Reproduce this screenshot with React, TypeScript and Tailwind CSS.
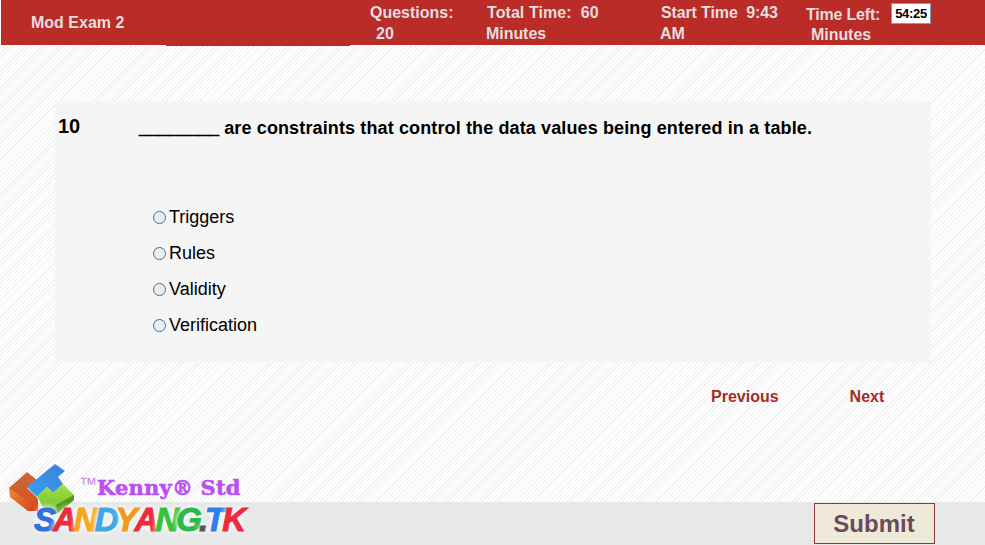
const options = ['Triggers', 'Rules', 'Validity', 'Verification'];

const letters: [string, string][] = [
  ['S', 'text-[#2f6fe0]'],
  ['A', 'text-[#ee2a3c]'],
  ['N', 'text-[#f5a81c]'],
  ['D', 'text-[#3fa9e8]'],
  ['Y', 'text-[#f09a1a]'],
  ['A', 'text-[#ee2a3c]'],
  ['N', 'text-[#35c23c]'],
  ['G', 'text-[#2fb84a]'],
  ['.', 'text-[#555555]'],
  ['T', 'text-[#2f7fe8]'],
  ['K', 'text-[#ee2a3c]'],
];

function Logo() {
  return (
    <div className="absolute left-[8px] top-[463px] w-[240px] h-[82px]">
      <svg width="72" height="56" viewBox="0 0 72 56" className="absolute left-0 top-0">
        <defs>
          <linearGradient id="orange" x1="0" y1="0" x2="0" y2="1">
            <stop offset="0" stopColor="#c9683c" />
            <stop offset="1" stopColor="#d9551e" />
          </linearGradient>
          <linearGradient id="side" x1="0" y1="0" x2="1" y2="1">
            <stop offset="0" stopColor="#f08a3c" />
            <stop offset="1" stopColor="#d23c14" />
          </linearGradient>
          <linearGradient id="blue" x1="0" y1="1" x2="1" y2="0">
            <stop offset="0" stopColor="#35a4f2" />
            <stop offset="1" stopColor="#3f7ed6" />
          </linearGradient>
          <linearGradient id="green" x1="0" y1="0" x2="0" y2="1">
            <stop offset="0" stopColor="#a4e045" />
            <stop offset="1" stopColor="#6fc02c" />
          </linearGradient>
        </defs>
        <path d="M1 25 L2 34 L20 48 L30 48 L30 36 L21 27 Z" fill="url(#side)" />
        <path d="M1 25 L19 9 L29 17 L19 25 L29 35 L21 39 Z" fill="url(#orange)" />
        <path d="M19 24 L47 1 L57 8 L50 14 L55 21 L45 30 L39 24 L29 34 Z" fill="url(#blue)" />
        <path d="M29 33 L39 24 L45 30 L55 21 L66 32 L66 37 L50 50 L38 50 Z" fill="url(#green)" />
        <path d="M48 42 L66 32 L66 37 L50 50 Z" fill="#4f9a1e" />
      </svg>
      <div className="absolute left-[71px] top-[12px] flex items-start font-['DejaVu_Serif',serif] font-bold text-[#bc4ff2] text-[21px] leading-[26px] whitespace-pre [-webkit-text-stroke:0.6px_#bc4ff2]">
        <span className="text-[18px] leading-[18px] font-normal font-['Liberation_Sans',sans-serif] text-[#c987ee] [-webkit-text-stroke:0px]">™</span>
        <span className="tracking-[0.2px]">Kenny® Std</span>
      </div>
      <div className="absolute left-[26px] top-[38px] flex font-['Liberation_Sans',sans-serif] font-bold italic text-[33px] leading-[38px] tracking-[-3px] [-webkit-text-stroke:1px_currentColor] [text-shadow:0_0_6px_#ffffff,0_0_6px_#ffffff]">
        {letters.map(([ch, color], i) => (
          <span key={i} className={color}>{ch}</span>
        ))}
      </div>
    </div>
  );
}

export default function App() {
  return (
    <div className="relative w-[985px] h-[545px] flex flex-col overflow-hidden font-['Liberation_Sans',sans-serif] bg-[#fbfbfb] bg-[repeating-linear-gradient(135deg,#ffffff_0px,#ffffff_2px,#efefef_2px,#efefef_3px)]">
      <header className="relative ml-[1px] h-[45px] shrink-0 bg-[#b92c28] flex text-[#e6dede] font-bold text-[16px] leading-[22px]">
        <div className="w-[369px] pl-[30px] pt-[12px]">Mod Exam 2</div>
        <div className="w-[116px] pt-[2px]">
          <div>Questions:</div>
          <div className="pl-[6px] -mt-[1px]">20</div>
        </div>
        <div className="w-[174px] pt-[2px]">
          <div className="pl-[1px] whitespace-pre tracking-[0.07px]">Total Time:  60</div>
          <div className="-mt-[1px] -tracking-[0.05px]">Minutes</div>
        </div>
        <div className="w-[146px] pt-[2px]">
          <div className="pl-[1px] whitespace-pre -tracking-[0.13px]">Start Time  9:43</div>
          <div className="-mt-[1px]">AM</div>
        </div>
        <div className="w-[85px] pt-[4px]">
          <div className="-tracking-[0.2px]">Time Left:</div>
          <div className="pl-[5px] -mt-[2px] -tracking-[0.05px]">Minutes</div>
        </div>
        <div className="mt-[3px] w-[40px] h-[21px] bg-white border border-[#7f9db9] text-black text-[13px] leading-[19px] text-center -tracking-[0.3px]">54:25</div>
        <div className="absolute left-[165px] top-[45px] w-[184px] h-px bg-[#b92c28]" />
      </header>

      <main className="ml-[55px] mt-[56px] w-[876px] h-[261px] shrink-0 bg-[#f5f5f5] pt-[14px] flex">
        <div className="w-[84px] pl-[3px] -mt-[1px] text-[20px] leading-[24px] font-bold text-black">10</div>
        <div className="flex-1">
          <div className="text-[18px] leading-[26px] font-bold text-black tracking-[0.125px]">
            <span className="tracking-normal [-webkit-text-stroke:0.6px_black]">________</span> are constraints that control the data values being entered in a table.
          </div>
          <div className="mt-[58px] ml-[14px] flex flex-col">
            {options.map((o) => (
              <label key={o} className="h-[36px] flex items-center gap-[3px] text-[18px] text-black">
                <span className="w-[13px] h-[13px] rounded-full border border-[#3f6f9f] bg-[#ececec]" />
                {o}
              </label>
            ))}
          </div>
        </div>
      </main>

      <nav className="mt-[24px] h-[22px] shrink-0 flex text-[#a52a2a] font-bold text-[16px] leading-[22px]">
        <span className="ml-[711px]">Previous</span>
        <span className="ml-[71px]">Next</span>
      </nav>

      <footer className="mt-auto h-[43px] shrink-0 bg-[#e7e8e8] flex justify-end items-end pr-[50px] pb-[1px]">
        <button className="w-[121px] h-[41px] bg-[#efe9d9] border border-[#8a3c3c] text-[#6b4a5a] font-bold text-[24px] pr-[1px]">Submit</button>
      </footer>

      <Logo />
    </div>
  );
}
